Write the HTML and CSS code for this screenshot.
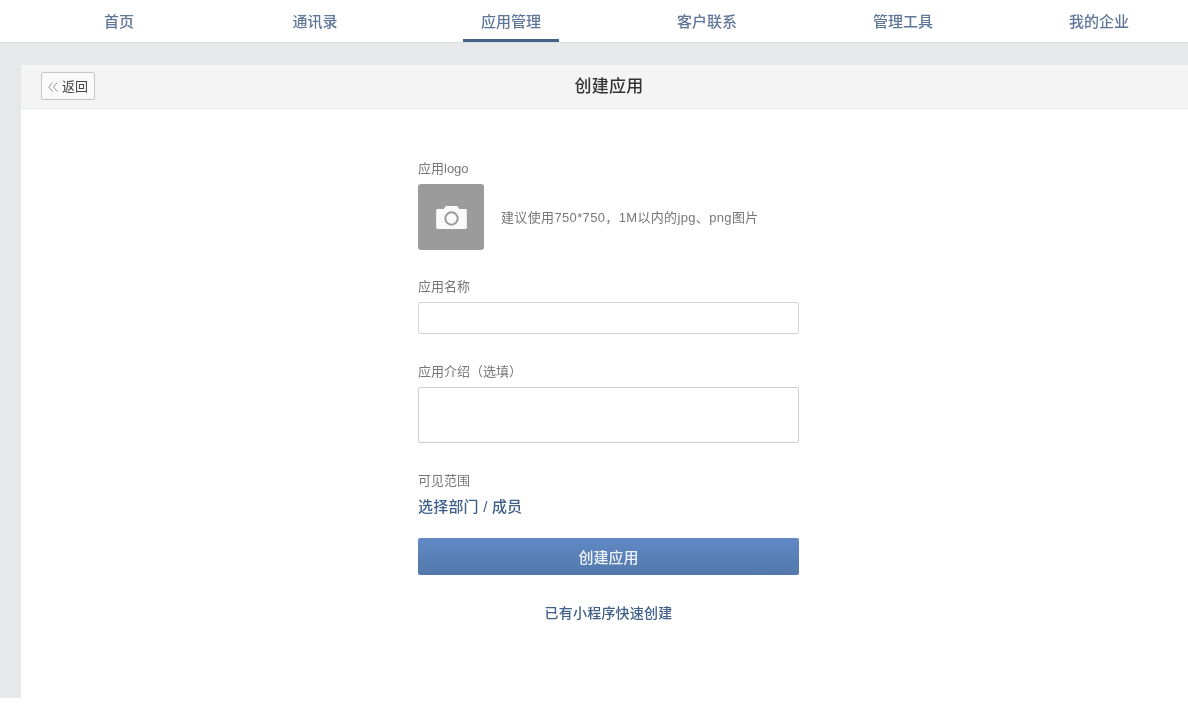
FILE: index.html
```html
<!DOCTYPE html>
<html lang="zh-CN">
<head>
<meta charset="utf-8">
<title>创建应用</title>
<link rel="stylesheet" href="styles.css">
</head>
<body>
<div class="page">
  <nav class="nav">
    <a class="nav-item">首页</a>
    <a class="nav-item">通讯录</a>
    <a class="nav-item active">应用管理</a>
    <a class="nav-item">客户联系</a>
    <a class="nav-item">管理工具</a>
    <a class="nav-item">我的企业</a>
  </nav>
  <div class="content">
    <main class="card">
      <header class="card-head">
        <button class="back" type="button">
          <svg class="back-icon" viewBox="0 0 10 10" width="10" height="10" aria-hidden="true">
            <path d="M4.500 0.500 L0.800 5 L4.500 9.500 M9.200 0.500 L5.500 5 L9.200 9.500" fill="none" stroke="#8a8a8a" stroke-width="0.9"/>
          </svg>
          <span class="back-text">返回</span>
        </button>
        <h1 class="title">创建应用</h1>
      </header>
      <form class="form">
        <div class="label">应用logo</div>
        <div class="logo-row">
          <div class="logo-box">
            <svg viewBox="0 0 32 24" width="31" height="23" aria-hidden="true">
              <path fill="#fafafa" fill-rule="evenodd" d="M1.500 3 H8 L9.500 0.500 Q9.800 0 10.500 0 H21.500 Q22.200 0 22.500 0.500 L24 3 H30.500 Q32 3 32 4.500 V22.500 Q32 24 30.500 24 H1.500 Q0 24 0 22.500 V4.500 Q0 3 1.500 3 Z M16 5.500 A7.500 7.500 0 1 0 16 20.500 A7.500 7.500 0 1 0 16 5.500 Z M16 7.600 A5.400 5.400 0 1 1 16 18.400 A5.400 5.400 0 1 1 16 7.600 Z"/>
            </svg>
          </div>
          <div class="hint">建议使用750*750，1M以内的jpg、png图片</div>
        </div>
        <div class="label name-label">应用名称</div>
        <div class="input"></div>
        <div class="label intro-label">应用介绍（选填）</div>
        <div class="textarea"></div>
        <div class="label scope-label">可见范围</div>
        <a class="scope-link">选择部门 / 成员</a>
        <button class="submit" type="button">创建应用</button>
        <a class="quick">已有小程序快速创建</a>
      </form>
    </main>
  </div>
</div>
</body>
</html>
```

FILE: styles.css
```css
* { box-sizing: border-box; }
html, body { margin: 0; padding: 0; background: #fff; }
body {
  font-family: "Liberation Sans", "Noto Sans CJK SC", sans-serif;
  overflow: hidden;
}
.page { width: 1188px; height: 698px; background: #e7e8ea; overflow: hidden; display: flex; flex-direction: column; }
.nav {
  height: 43px;
  flex: none;
  background: #fff;
  border-bottom: 1px solid #dcdddf;
  display: flex;
  padding-left: 21px;
  filter: blur(0.35px);
}
.nav-item {
  flex: none;
  width: 196px;
  height: 42px;
  position: relative;
  text-align: center;
  font-size: 15px;
  font-weight: 500;
  line-height: 44px;
  color: #5f7699;
}
.nav-item.active::after {
  content: "";
  position: absolute;
  left: 50%;
  bottom: 0;
  width: 96px;
  height: 3px;
  margin-left: -48px;
  background: #426288;
}
.content { flex: 1; padding: 22px 0 0 21px; min-height: 0; }
.card { width: 1176px; height: 100%; background: #fff; border-radius: 3px 0 0 0; }
.card-head {
  height: 44px;
  background: #f4f4f4;
  border-bottom: 1px solid #e6e7e9;
  display: flex;
  align-items: center;
  justify-content: center;
  position: relative;
  border-radius: 3px 0 0 0;
}
.back {
  position: absolute;
  left: 20px;
  top: 7px;
  width: 54px;
  height: 28px;
  padding: 0 0 0 6px;
  background: #fafafa;
  border: 1px solid #c6c6c6;
  border-radius: 2px;
  display: flex;
  align-items: center;
  gap: 4px;
  font: inherit;
  font-size: 13px;
  color: #444;
  filter: blur(0.35px);
}
.back-icon { flex: none; margin-top: 2px; }
.back-text { margin-bottom: 2px; }
.title { margin: 0; font-size: 17px; font-weight: 500; letter-spacing: 0.25px; color: #333; line-height: 43px; filter: blur(0.35px); }
.form { width: 381px; margin-left: 397px; padding-top: 51px; display: flex; flex-direction: column; filter: blur(0.35px); }
.label { font-size: 13px; line-height: 18px; color: #777; }
.logo-row { display: flex; align-items: center; margin-top: 6px; }
.logo-box {
  width: 66px;
  height: 66px;
  background: #9b9b9b;
  border-radius: 3px;
  display: flex;
  align-items: center;
  justify-content: center;
}
.hint { margin: 0 0 2px 17px; font-size: 13px; letter-spacing: 0.35px; color: #777; }
.name-label { margin-top: 28px; }
.input { height: 32px; margin-top: 6px; border: 1px solid #d6d6d6; border-radius: 2px; background: #fff; }
.intro-label { margin-top: 29px; }
.textarea { height: 56px; margin-top: 6px; border: 1px solid #cfcfcf; border-radius: 2px; background: #fff; }
.scope-label { margin-top: 29px; }
.scope-link { margin-top: 7px; font-size: 15px; font-weight: 500; letter-spacing: 0.2px; line-height: 20px; color: #3f5f88; }
.submit {
  height: 37px;
  margin-top: 21px;
  border: 0;
  border-radius: 2px;
  background: linear-gradient(#6189c4, #5278ab);
  color: #eef2f8;
  font: inherit;
  font-size: 15px;
  font-weight: 500;
}
.quick { margin-top: 28px; text-align: center; font-size: 14px; font-weight: 500; letter-spacing: 0.2px; line-height: 20px; color: #3f5f88; }
```
